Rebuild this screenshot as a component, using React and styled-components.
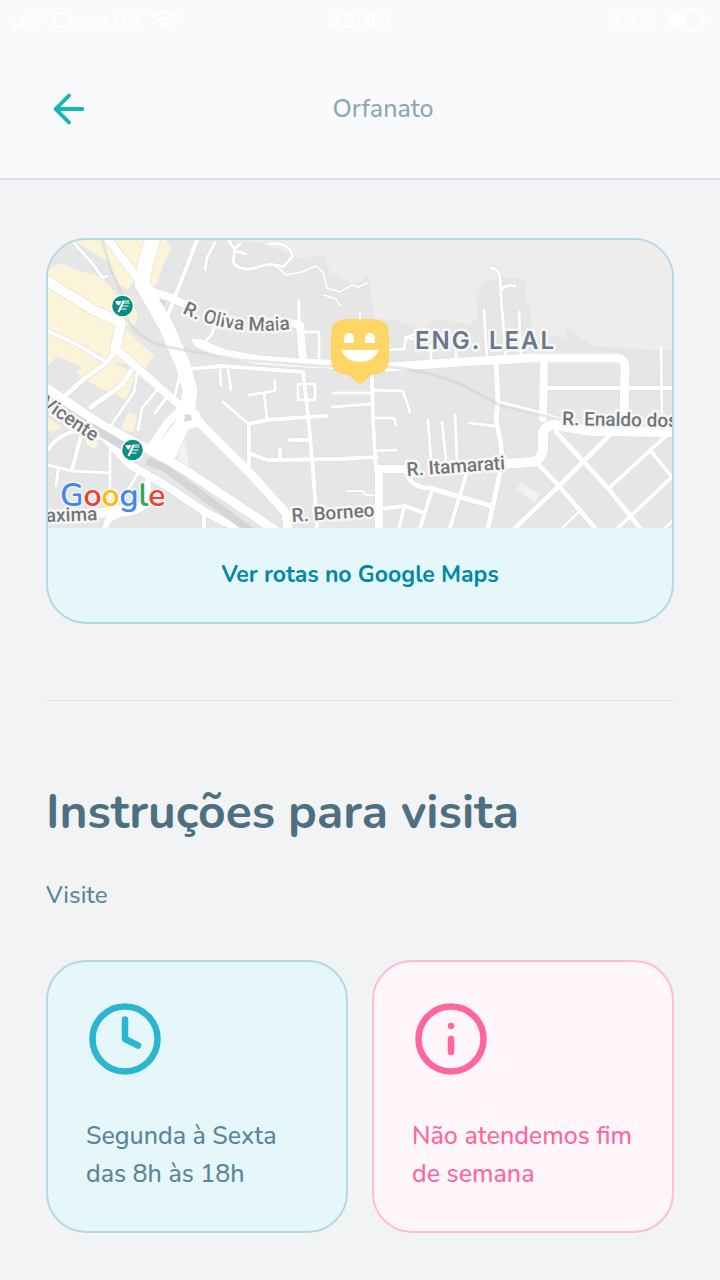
import React from "react";
import styled, { createGlobalStyle } from "styled-components";

const GlobalStyle = createGlobalStyle`
  * { box-sizing: border-box; }
  body {
    margin: 0;
    background: #f2f3f5;
    font-family: Nunito, Lato, sans-serif;
  }
`;

const Page = styled.div`
  display: flex;
  flex-direction: column;
  min-height: 100vh;
`;

const TopArea = styled.div`
  background: #f9fafc;
  border-bottom: 2px solid #dddfe9;
`;

const StatusBar = styled.div`
  display: grid;
  grid-template-columns: 1fr auto 1fr;
  align-items: center;
  height: 40px;
  padding: 0 12px;
  color: #ffffff;
  font-family: Inter, sans-serif;
  font-size: 22px;
  line-height: 28px;
`;

const StatusGroup = styled.div`
  display: flex;
  align-items: center;
  justify-content: ${(p) => p.$align || "flex-start"};
  gap: 8px;
`;

const Clock = styled.time`
  font-weight: 600;
`;

const Header = styled.header`
  display: flex;
  align-items: center;
  height: 138px;
  padding: 0 46px;
`;

const BackButton = styled.button`
  display: grid;
  place-items: center;
  width: 46px;
  height: 46px;
  padding: 0;
  border: 0;
  background: none;
  color: #15b6b6;
`;

const Title = styled.h1`
  flex: 1;
  margin: 0;
  color: #8fa7b3;
  font-size: 25px;
  font-weight: 500;
  line-height: 38px;
  text-align: center;
`;

const Content = styled.main`
  padding: 58px 46px 46px;
`;

const MapCard = styled.section`
  overflow: hidden;
  border: 2px solid #b3dae2;
  border-radius: 40px;
  background: #e6f7fb;
`;

const MapDrawing = styled.svg`
  display: block;
  width: 100%;
  height: 288px;
`;

const RoutesLink = styled.a`
  display: block;
  padding: 28px 0;
  color: #0089a5;
  font-size: 23px;
  font-weight: 700;
  line-height: 38px;
  text-align: center;
  text-decoration: none;
`;

const Divider = styled.hr`
  height: 1px;
  margin: 76px 0 79px;
  border: 0;
  background: #dde0e4;
`;

const Heading = styled.h2`
  margin: 0 0 32px;
  color: #4d6f80;
  font-size: 48px;
  font-weight: 700;
  line-height: 64px;
`;

const Text = styled.p`
  margin: 0;
  color: ${(p) => p.$color || "#5c8599"};
  font-size: ${(p) => p.$size || 25}px;
  font-weight: 500;
  line-height: 38px;
`;

const Cards = styled.div`
  display: grid;
  grid-template-columns: 1fr 1fr;
  gap: 24px;
  margin-top: 46px;
`;

const InfoCard = styled.article`
  display: flex;
  flex-direction: column;
  gap: 39px;
  padding: 38px;
  border: 2px solid ${(p) => p.$border};
  border-radius: 40px;
  background: ${(p) => p.$background};
`;

const LineIcon = ({ size, color, children }) => (
  <svg
    width={size}
    height={size}
    viewBox="0 0 24 24"
    fill="none"
    stroke={color}
    strokeWidth="2"
    strokeLinecap="round"
    strokeLinejoin="round"
    aria-hidden="true"
  >
    {children}
  </svg>
);

const hills =
  "M225 240 L262 243 L300 258 L325 255 L330 272 L355 285 L368 276 L375 320 L392 319 L420 330 L438 318 L470 325 L478 318 L476 295 L484 281 L504 277 L528 280 L524 296 L530 308 L532 334 L565 338 L567 328 L592 346 L672 351 L672 240 Z";

const blocks = [
  "M48 270 L60 263 L76 270 L96 275 L109 285 L120 300 L138 311 L135 325 L124 327 L142 345 L154 355 L143 372 L128 364 L116 362 L96 386 L80 366 L57 356 L48 366 Z",
  "M73 240 L166 240 L172 249 L164 262 L157 284 L149 292 L137 276 L128 290 L118 284 L108 262 Z",
  "M48 240 L63 240 L48 259 Z",
  "M75 372 L93 362 L118 365 L136 374 L126 400 L115 395 L96 386 Z",
  "M128 412 L137 415 L133 432 L121 429 Z",
  "M48 418 L62 427 L52 432 L48 431 Z",
  "M88 438 L99 443 L95 449 L86 444 Z",
];

const lots = [
  "M179 446 L186 440 L189 466 L178 462 Z",
  "M521 483 L540 495 L534 503 L517 489 Z",
];

const railway =
  "M102 240 L111 270 L121 292 L126 318 Q140 341 168 347 L240 360 L320 366 L392 367 Q430 371 460 384 L500 405 L562 420";

const roads = [
  [10, "M48 282 L92 309 L121 323 L115 350"],
  [8, "M115 348 L150 379 L185 410"],
  [5, "M115 352 L105 364 L85 378 L66 395"],
  [5, "M131 371 L122 385 L91 407"],
  [4, "M48 331 L76 344 L103 360"],
  [8, "M109 240 L122 258 L142 284"],
  [15, "M153 238 L145 265 L142 284 L156 308 L168 330 L183 365 L190 390 L187 415 L170 452"],
  [3, "M142 292 L160 324 L173 350 L180 375 L174 398"],
  [8, "M148 290 L172 298 L184 304"],
  [4, "M197 240 L187 266 L174 299 L168 315"],
  [3, "M74 243 L91 262 L103 278 L107 276"],
  [3, "M215 242 L207 258 L205 270"],
  [3, "M229 241 L235 250 L233 262 Q240 273 258 267 Q272 262 283 267 L293 256 Q288 241 268 244"],
  [3, "M234 249 L240 244 M235 251 L246 254"],
  [2, "M275 265 L286 275 L302 272 L316 266 L323 272 L327 288 L340 292 L352 285 L358 287 L367 283"],
  [2, "M324 295 L336 299 L340 306 M360 311 L360 320"],
  [3, "M299 300 L299 322"],
  [8, "M290 323 L300 325 L303 361"],
  [9, "M198 343 L225 354 L260 360 L303 363 L390 367 L460 362 L530 358 L616 358 Q625 358 625 368 L624 418"],
  [3, "M216 322 L212 334 L203 344 L193 340"],
  [4, "M190 369 L222 366 L262 369 L303 372 L308 415 L313 470 L317 528"],
  [3, "M220 370 L221 385 M228 370 L231 390"],
  [3, "M303 332 L319 332 L319 362"],
  [3, "M390 350 L404 349 L406 338 L425 329 M405 337 L418 340"],
  [3, "M431 346 L431 360 M456 346 L456 360"],
  [3, "M491 268 Q500 269 500 279 L502 310 L506 359 M501 290 Q506 284 515 286"],
  [3, "M484 310 L487 360 M519 312 L521 358"],
  [5, "M496 362 L498 403 L496 418 L501 445 L502 464 L488 528"],
  [8, "M544 362 L543 418"],
  [3, "M661 347 L662 420"],
  [4, "M545 388 L672 388"],
  [4, "M498 402 L540 413 L562 420"],
  [10, "M672 432 L590 431 L556 425 Q546 424 543 432 L543 449 Q540 463 530 462 L505 464"],
  [3, "M469 423 L495 426"],
  [5, "M556 432 L608 488 L640 528"],
  [5, "M612 433 L558 487 L515 528"],
  [5, "M538 464 L560 487 L595 528"],
  [4, "M668 434 L608 489"],
  [4, "M650 450 L672 477 L618 528"],
  [3, "M580 511 L562 528 M665 528 L672 521"],
  [4, "M372 375 L373 420 L376 470"],
  [3, "M333 393 L373 393 M373 390 L403 391 L410 412 M332 407 L371 404"],
  [3, "M375 418 L394 418 L396 425 M376 451 L396 450"],
  [3, "M298 384 L315 384 L315 400 L298 400 Z"],
  [3, "M249 395 L275 391 L275 380 M264 393 L267 418"],
  [4, "M249 472 L249 424 L267 420 L308 417 L327 416"],
  [3, "M223 402 L249 424"],
  [4, "M290 440 L310 440"],
  [4, "M249 453 L267 460 L340 459 L377 457 M280 449 L280 459"],
  [9, "M187 408 L202 425 L249 472 L286 513 L288 530"],
  [8, "M410 469 L379 469 L379 528"],
  [2, "M347 491 L362 491 L366 495 L378 495"],
  [4, "M378 509 L405 506 L424 513 M404 508 L399 528"],
  [5, "M407 474 Q412 488 430 488 L460 497 L492 506"],
  [4, "M432 490 L420 528 M467 472 L450 528"],
  [3, "M428 420 L431 460 M442 422 L446 460 M455 415 L457 460"],
  [9, "M48 389 L100 424 L150 450 L185 470 L278 532"],
  [8, "M105 438 L130 465 L165 485 L205 512 L245 532"],
  [8, "M187 404 L168 422 L150 448"],
  [12, "M186 418 L160 450"],
  [7, "M186 406 L197 415 L196 424 L176 428"],
  [3, "M137 374 L134 392 L112 424 M157 390 L142 408 L138 430 M166 398 L155 413"],
  [4, "M48 450 Q58 434 76 431 L100 438 M82 432 L72 470"],
  [3, "M48 465 L72 471 L110 473 M110 440 L110 500 M58 470 L56 485"],
  [3, "M140 470 L128 490"],
  [10, "M48 517 L95 514 L140 507"],
  [6, "M148 478 L148 500 Q145 512 120 514 L108 520 L105 528"],
  [4, "M204 514 L204 528"],
];

const MapRoads = () => (
  <g fill="none" strokeLinejoin="round" strokeLinecap="round">
    {roads.map(([width, d]) => (
      <path key={d} d={d} stroke="#d9dadc" strokeWidth={width + 1} />
    ))}
    {roads.map(([width, d]) => (
      <path key={d} d={d} stroke="#ffffff" strokeWidth={width} />
    ))}
  </g>
);

const Station = ({ x, y }) => (
  <g transform={`translate(${x} ${y})`}>
    <circle r="11.5" fill="#fff" />
    <circle r="10.3" fill="#0b8c84" />
    <path d="M-7 -5 H-1 L-3 -1 Q-4 0 -5 -1 Q-7 -3 -7 -5Z" fill="#fff" />
    <path d="M0 -5 H7 M0 -3 H7 M-1 0 H6 M-2 3 H4" stroke="#fff" strokeWidth="1" fill="none" />
    <path d="M1 -5 L-4 6" stroke="#fff" strokeWidth="2" />
  </g>
);

const MapLabels = styled.g`
  fill: #6f767c;
  stroke: #f7f7f7;
  stroke-width: 5px;
  stroke-linejoin: round;
  paint-order: stroke;
  font-family: Roboto, sans-serif;
  font-size: 19px;
  font-weight: 500;
`;

const District = styled.text`
  fill: #6a778d;
  font-family: Inter, sans-serif;
  font-size: 24px;
  font-weight: 600;
  letter-spacing: 2px;
`;

const GoogleMark = styled.text`
  stroke: #f7f7f7;
  stroke-width: 3px;
  paint-order: stroke;
  font-family: Nunito, Lato, sans-serif;
  font-size: 32px;
  font-weight: 600;
`;

const googleLetters = [
  ["G", "#4285f4"],
  ["o", "#ea4335"],
  ["o", "#fbbc05"],
  ["g", "#4285f4"],
  ["l", "#34a853"],
  ["e", "#ea4335"],
];

const OrphanageMap = () => (
  <MapDrawing viewBox="48 240 624 288" preserveAspectRatio="xMidYMid slice" role="img" aria-label="Mapa">
    <rect x="-400" y="240" width="1600" height="288" fill="#e6e6e7" />
    <path d={hills} fill="#efedeb" />
    {blocks.map((d) => (
      <path key={d} d={d} fill="#fcf4d9" />
    ))}
    {lots.map((d) => (
      <path key={d} d={d} fill="#f1f2f2" />
    ))}
    <MapRoads />
    <path d="M48 401 L75 418 L110 438 L126 448 M147 461 L165 468 L252 532" fill="none" stroke="#d3d5d7" strokeWidth="8" />
    <path d="M185 414 L191 415 L192 420 L184 422 Z M159 299 L166 301 L164 307 Z" fill="#d9dadc" />
    <path d={railway} fill="none" stroke="#cdd0d3" strokeWidth="3" opacity="0.5" />
    <MapLabels>
      <path id="oliva-street" d="M182 313 Q232 338 300 328" fill="none" stroke="none" />
      <text>
        <textPath href="#oliva-street">R. Oliva Maia</textPath>
      </text>
      <text transform="translate(562 425) rotate(1)">R. Enaldo dos</text>
      <text transform="translate(407 476) rotate(-4)">R. Itamarati</text>
      <text transform="translate(292 522) rotate(-4)">R. Borneo</text>
      <text transform="translate(40 406) rotate(34)">Vicente</text>
      <text transform="translate(46 522) rotate(-2)">axima</text>
      <District x="415" y="349">ENG. LEAL</District>
      <GoogleMark x="60" y="506">
        {googleLetters.map(([letter, color], i) => (
          <tspan key={i} fill={color}>{letter}</tspan>
        ))}
      </GoogleMark>
    </MapLabels>
    <Station x={122.5} y={306} />
    <Station x={132.5} y={450} />
    <path
      d="M347 319 H373 Q389 319 389 335 V359 Q389 374 372 375 L362 383 Q360 385 358 383 L348 375 Q331 374 331 359 V335 Q331 319 347 319 Z"
      fill="#ffd565"
    />
    <path
      d="M344 343 V338 A5 5 0 0 1 354 338 V343 Z M365 343 V338 A5 5 0 0 1 375 338 V343 Z M342 350 H378 C375 366 345 366 342 350 Z"
      fill="#fff"
    />
  </MapDrawing>
);

export default function App() {
  return (
    <Page>
      <GlobalStyle />
      <TopArea>
        <StatusBar>
          <StatusGroup>
            <svg width="32" height="20" viewBox="0 0 32 20" fill="#fff" aria-hidden="true">
              <rect x="0" y="12" width="5" height="7" rx="2" />
              <rect x="8" y="8" width="5" height="11" rx="2" />
              <rect x="16" y="4" width="5" height="15" rx="2" opacity="0.3" />
              <rect x="24" y="0" width="5" height="19" rx="2" opacity="0.3" />
            </svg>
            <span>Claro BR</span>
            <svg width="30" height="22" viewBox="0 0 30 22" aria-hidden="true">
              <path d="M2 8 Q15 -3 28 8 M7 13 Q15 6 23 13" fill="none" stroke="#fff" strokeWidth="4" />
              <path d="M10 16 Q15 12 20 16 L15 21 Z" fill="#fff" />
            </svg>
          </StatusGroup>
          <Clock>22:45</Clock>
          <StatusGroup $align="flex-end">
            <span>48%</span>
            <svg width="42" height="22" viewBox="0 0 42 22" aria-hidden="true">
              <rect x="1" y="1" width="36" height="20" rx="5" fill="none" stroke="#fff" strokeWidth="2" opacity="0.6" />
              <rect x="3" y="4" width="17" height="14" rx="3" fill="#fff" />
              <path d="M39 7 Q43 11 39 15 Z" fill="#fff" opacity="0.6" />
            </svg>
          </StatusGroup>
        </StatusBar>
        <Header>
          <BackButton type="button" aria-label="Voltar">
            <LineIcon size={46} color="currentColor">
              <path d="M19 12H5 M12 19L5 12L12 5" />
            </LineIcon>
          </BackButton>
          <Title>Orfanato</Title>
        </Header>
      </TopArea>
      <Content>
        <MapCard>
          <OrphanageMap />
          <RoutesLink href="#rotas">Ver rotas no Google Maps</RoutesLink>
        </MapCard>
        <Divider />
        <Heading>Instruções para visita</Heading>
        <Text $size={24}>Visite</Text>
        <Cards>
          <InfoCard $border="#b3dae2" $background="#e6f7fb">
            <LineIcon size={78} color="#2ab5d1">
              <circle cx="12" cy="12" r="10" />
              <path d="M12 6v6l4 2" />
            </LineIcon>
            <Text>Segunda à Sexta das 8h às 18h</Text>
          </InfoCard>
          <InfoCard $border="#ffbcd4" $background="#fef6f9">
            <LineIcon size={78} color="#ff669d">
              <circle cx="12" cy="12" r="10" />
              <path d="M12 16v-4 M12 8h.01" />
            </LineIcon>
            <Text $color="#ff669d">Não atendemos fim de semana</Text>
          </InfoCard>
        </Cards>
      </Content>
    </Page>
  );
}
